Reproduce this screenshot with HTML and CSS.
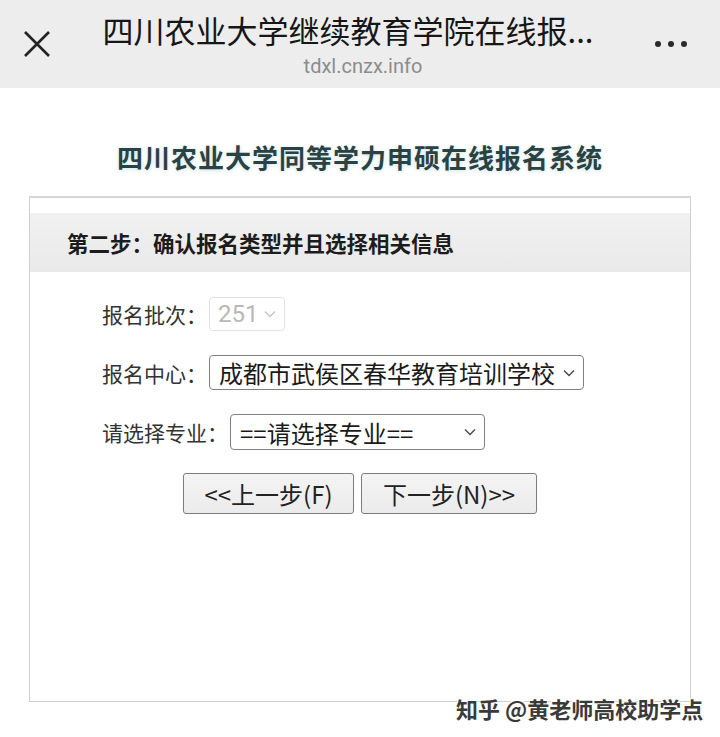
FILE: index.html
```html
<!DOCTYPE html>
<html>
<head>
    <meta charset="utf-8">
    <link rel="stylesheet" href="styles.css">
</head>
<body>
    <div class="topbar">
        <div class="close">
            <svg width="30" height="30" viewBox="0 0 30 30"><path d="M3 3 L27 27 M27 3 L3 27" stroke="#222" stroke-width="2.6" fill="none"/></svg>
        </div>
        <div class="titles">
            <div class="title">四川农业大学继续教育学院在线报...</div>
            <div class="url">tdxl.cnzx.info</div>
        </div>
        <div class="more">
            <span></span><span></span><span></span>
        </div>
    </div>

    <h1 class="heading">四川农业大学同等学力申硕在线报名系统</h1>

    <div class="panel">
        <div class="panel-head">第二步：确认报名类型并且选择相关信息</div>

        <div class="form">
            <div class="row">
                <span class="label">报名批次：</span>
                <div class="select select-disabled w-batch">
                    <span>251</span>
                    <svg class="chev" width="12" height="8" viewBox="0 0 12 8"><path d="M1 1.5 L6 6.5 L11 1.5" stroke="#c4c4c4" stroke-width="1.3" fill="none"/></svg>
                </div>
            </div>
            <div class="row">
                <span class="label">报名中心：</span>
                <div class="select w-center">
                    <span>成都市武侯区春华教育培训学校</span>
                    <svg class="chev" width="12" height="8" viewBox="0 0 12 8"><path d="M1 1.5 L6 6.5 L11 1.5" stroke="#444" stroke-width="1.3" fill="none"/></svg>
                </div>
            </div>
            <div class="row">
                <span class="label">请选择专业：</span>
                <div class="select w-major">
                    <span>==请选择专业==</span>
                    <svg class="chev" width="12" height="8" viewBox="0 0 12 8"><path d="M1 1.5 L6 6.5 L11 1.5" stroke="#444" stroke-width="1.3" fill="none"/></svg>
                </div>
            </div>
        </div>

        <div class="buttons">
            <button class="btn btn-prev">&lt;&lt;上一步(F)</button>
            <button class="btn btn-next">下一步(N)&gt;&gt;</button>
        </div>
    </div>

    <div class="watermark">知乎 @黄老师高校助学点</div>
</body>
</html>
```

FILE: styles.css
```css
body {
    margin: 0;
    font-family: "Noto Sans CJK SC", "Liberation Sans", sans-serif;
    color: #222;
    background: #fff;
    position: relative;
    height: 737px;
    overflow: hidden;
}

.topbar {
    height: 88px;
    background: #ededed;
    display: flex;
    align-items: flex-start;
}

.close {
    width: 30px;
    height: 30px;
    margin: 29px 0 0 22px;
}

.titles {
    width: 520px;
    margin-left: 51px;
    display: flex;
    flex-direction: column;
    align-items: center;
}

.title {
    font-size: 31px;
    line-height: 38px;
    margin-top: 11px;
    margin-left: -30px;
    color: #161616;
    white-space: nowrap;
}

.url {
    font-family: Roboto, "Liberation Sans", sans-serif;
    font-size: 20px;
    line-height: 24px;
    color: #8c8c8c;
    margin-top: 5px;
}

.more {
    display: flex;
    gap: 7px;
    margin: 41px 0 0 32px;
}

.more span {
    width: 6px;
    height: 6px;
    border-radius: 50%;
    background: #2a2a2a;
}

.heading {
    margin: 50px 0 0;
    text-align: center;
    font-size: 26px;
    line-height: 38px;
    font-weight: bold;
    color: #2b4242;
    text-shadow: 0 1px 4px rgba(140, 190, 200, 0.45);
    letter-spacing: 1px;
}

.panel {
    margin: 20px 29px 0;
    height: 503px;
    border: 1px solid #cfcfcf;
    border-top: 2px solid #d6d6d6;
}

.panel-head {
    margin-top: 15px;
    height: 59px;
    background: linear-gradient(#f1f1f1, #e9e9e9);
    padding-left: 37px;
    font-size: 21.5px;
    font-weight: bold;
    line-height: 59px;
    color: #1c1c1c;
}

.form {
    padding: 25px 0 0 72px;
    display: flex;
    flex-direction: column;
    gap: 24px;
}

.row {
    display: flex;
    align-items: center;
}

.label {
    font-size: 21px;
    color: #333;
    margin-right: 2px;
}

.select {
    height: 34px;
    border: 1px solid #808080;
    border-radius: 4px;
    background: #fff;
    display: flex;
    align-items: center;
    justify-content: space-between;
    padding: 0 8px 0 9px;
    box-sizing: border-box;
    font-size: 24px;
    color: #1a1a1a;
}

.select-disabled {
    border-color: #e2e2e2;
    color: #b8b8b8;
    font-family: Roboto, "Liberation Sans", sans-serif;
    padding-left: 8px;
}

.w-batch { width: 76px; }
.w-center { width: 375px; height: 35px; padding-left: 9px; }
.w-major { width: 255px; height: 36px; }

.chev {
    flex-shrink: 0;
}

.buttons {
    display: flex;
    justify-content: center;
    gap: 7px;
    margin-top: 23px;
}

.btn {
    height: 41px;
    border: 1px solid #7c7c7c;
    border-radius: 3px;
    background: linear-gradient(#f4f4f4, #ebebeb);
    font-family: "Noto Sans CJK SC", sans-serif;
    font-size: 24px;
    color: #222;
    padding: 0;
}

.btn-prev { width: 171px; }
.btn-next { width: 176px; }

.watermark {
    position: absolute;
    left: 456px;
    top: 692px;
    font-size: 22px;
    font-weight: bold;
    color: #3a3a3a;
    text-shadow: 1px 1px 0 #fff, -1px -1px 0 #fff, 1px -1px 0 #fff, -1px 1px 0 #fff;
    letter-spacing: 0;
}
```
